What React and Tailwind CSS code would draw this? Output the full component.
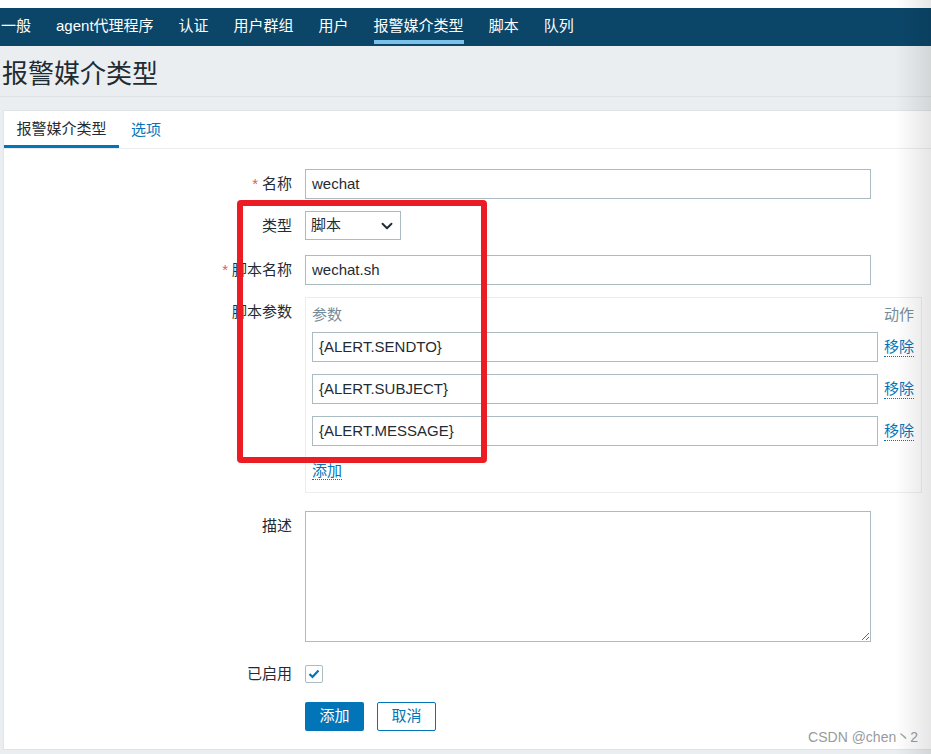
import { ChevronDown } from 'lucide-react';

const navItems = ['一般', 'agent代理程序', '认证', '用户群组', '用户', '报警媒介类型', '脚本', '队列'];
const params = ['{ALERT.SENDTO}', '{ALERT.SUBJECT}', '{ALERT.MESSAGE}'];

function Label({ children, required }) {
  return (
    <div className="w-[301px] shrink-0 pr-[13px] text-right leading-[30px] text-[#1f2c33]">
      {required && <span className="mr-[4px] text-[#e45959]">*</span>}
      {children}
    </div>
  );
}

export default function App() {
  return (
    <div className="relative flex h-[754px] flex-col overflow-hidden bg-[#ebeef0] font-['Liberation_Sans','Noto_Sans_CJK_SC',sans-serif] text-[15px] text-[#1f2c33]">
      <div className="h-[8px] shrink-0 bg-white" />

      {/* top nav */}
      <nav className="flex h-[38px] shrink-0 items-stretch bg-[#0b4669] pl-[1px]">
        {navItems.map((item) => (
          <div key={item} className="relative mr-[25px] flex items-center pb-[2px] text-white">
            {item}
            {item === '报警媒介类型' && (
              <span className="absolute bottom-[2px] left-0 right-0 h-[4px] bg-[#7cc1ea]" />
            )}
          </div>
        ))}
      </nav>

      {/* page title */}
      <header className="flex h-[51px] shrink-0 items-center border-b border-[#dde2e5] pl-[2px] pt-[6px]">
        <h1 className="text-[26px] leading-none font-normal text-[#1f2c33]">报警媒介类型</h1>
      </header>

      {/* card */}
      <div className="mt-[13px] ml-[3px] flex flex-1 flex-col border border-r-0 border-[#dfe4e7] bg-white">
        <div className="flex h-[38px] shrink-0 items-stretch border-b border-[#ebeef0]">
          <div className="flex w-[115px] items-center justify-center border-b-[3px] border-[#0275b8] pt-[3px] text-[#1f2c33]">
            报警媒介类型
          </div>
          <div className="flex items-center pl-[12px] pt-[2px] text-[#0275b8]">选项</div>
        </div>

        <div className="flex flex-col pt-[20px]">
          {/* 名称 */}
          <div className="flex">
            <Label required>名称</Label>
            <div className="flex h-[30px] w-[566px] items-center border border-[#acbbc2] pl-[6px]">wechat</div>
          </div>

          {/* 类型 */}
          <div className="mt-[12px] flex">
            <Label>类型</Label>
            <div className="flex h-[29px] w-[96px] items-center justify-between border border-[#acbbc2] pl-[5px] pr-[4px]">
              <span>脚本</span>
              <ChevronDown size={18} strokeWidth={2.5} className="text-[#1f2c33]" />
            </div>
          </div>

          {/* 脚本名称 */}
          <div className="mt-[14px] flex">
            <Label required>脚本名称</Label>
            <div className="flex h-[30px] w-[566px] items-center border border-[#acbbc2] pl-[6px]">wechat.sh</div>
          </div>

          {/* 脚本参数 */}
          <div className="mt-[12px] flex">
            <Label>脚本参数</Label>
            <div className="flex h-[196px] w-[617px] flex-col border border-[#ebeef0] px-[6px] pt-[7px]">
              <div className="flex h-[20px] items-center justify-between text-[#768d99]">
                <span>参数</span>
                <span className="pr-[1px]">动作</span>
              </div>
              <div className="mt-[7px] flex flex-col gap-[12px]">
                {params.map((p) => (
                  <div key={p} className="flex items-center">
                    <div className="flex h-[30px] w-[566px] items-center border border-[#acbbc2] pl-[6px]">{p}</div>
                    <span className="ml-[6px] border-b border-dotted border-[#0275b8] leading-[18px] text-[#0275b8]">
                      移除
                    </span>
                  </div>
                ))}
              </div>
              <div className="mt-[14px]">
                <span className="border-b border-dotted border-[#0275b8] leading-[18px] text-[#0275b8]">添加</span>
              </div>
            </div>
          </div>

          {/* 描述 */}
          <div className="mt-[18px] flex">
            <Label>描述</Label>
            <textarea className="h-[131px] w-[566px] resize border border-[#acbbc2] outline-none" readOnly />
          </div>

          {/* 已启用 */}
          <div className="mt-[23px] flex items-center">
            <div className="w-[301px] shrink-0 pr-[13px] text-right leading-[18px]">已启用</div>
            <div className="flex h-[18px] w-[18px] items-center justify-center rounded-[2px] border border-[#acbbc2]">
              <svg width="12" height="10" viewBox="0 0 12 10">
                <path d="M1.5 5 L4.5 8 L10.5 1.5" fill="none" stroke="#0275b8" strokeWidth="2.2" />
              </svg>
            </div>
          </div>

          {/* buttons */}
          <div className="mt-[19px] flex gap-[13px] pl-[301px]">
            <button className="h-[29px] w-[59px] rounded-[2px] bg-[#0275b8] text-white">添加</button>
            <button className="h-[29px] w-[59px] rounded-[2px] border border-[#0275b8] bg-white text-[#0275b8]">
              取消
            </button>
          </div>
        </div>
      </div>
      <div className="h-[4px] shrink-0" />

      {/* annotation box */}
      <div className="pointer-events-none absolute left-[237px] top-[200px] h-[263px] w-[250px] rounded-[4px] border-[6px] border-[#ec1c24]" />

      {/* watermark */}
      <div className="pointer-events-none absolute bottom-[6px] right-[13px] text-[14px] text-[#9a9a9a]">CSDN @chen丶2</div>

      {/* edge shade */}
      <div className="pointer-events-none absolute right-0 top-0 h-full w-[36px] bg-gradient-to-r from-transparent to-black/10" />
    </div>
  );
}
